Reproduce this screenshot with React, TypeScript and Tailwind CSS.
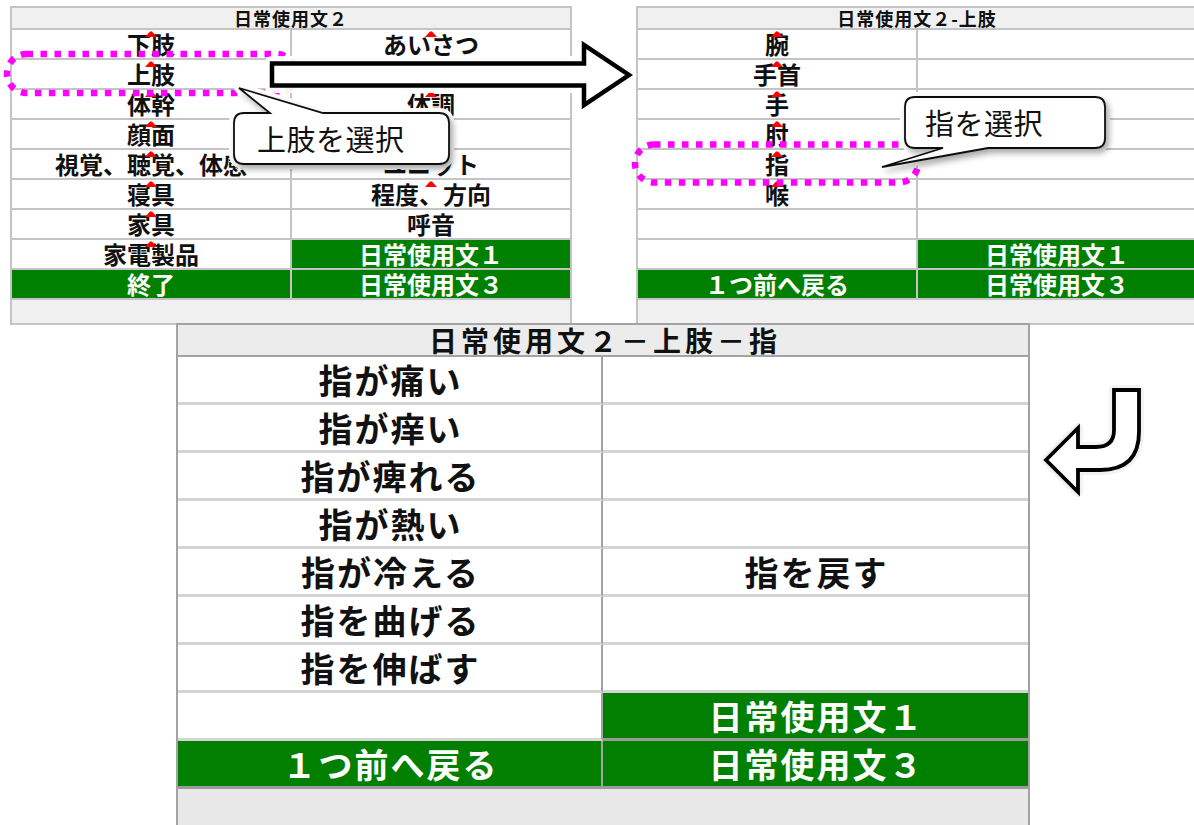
import React from 'react';

type Cell = { t?: string; g?: boolean; m?: boolean };

const font = "font-['Noto_Sans_CJK_JP','Noto_Sans',sans-serif]";

const upperRows: Cell[][] = [
  [{ t: '下肢', m: true }, { t: 'あいさつ', m: true }],
  [{ t: '上肢', m: true }, {}],
  [{ t: '体幹', m: true }, { t: '体調', m: true }],
  [{ t: '顔面', m: true }, {}],
  [{ t: '視覚、聴覚、体感', m: true }, { t: 'ユニット', m: true }],
  [{ t: '寝具', m: true }, { t: '程度、方向', m: true }],
  [{ t: '家具', m: true }, { t: '呼音' }],
  [{ t: '家電製品', m: true }, { t: '日常使用文１', g: true }],
  [{ t: '終了', g: true }, { t: '日常使用文３', g: true }],
];

const armRows: Cell[][] = [
  [{ t: '腕', m: true }, {}],
  [{ t: '手首', m: true }, {}],
  [{ t: '手', m: true }, {}],
  [{ t: '肘', m: true }, {}],
  [{ t: '指', m: true }, {}],
  [{ t: '喉', m: true }, {}],
  [{}, {}],
  [{}, { t: '日常使用文１', g: true }],
  [{ t: '１つ前へ戻る', g: true }, { t: '日常使用文３', g: true }],
];

const fingerRows: Cell[][] = [
  [{ t: '指が痛い' }, {}],
  [{ t: '指が痒い' }, {}],
  [{ t: '指が痺れる' }, {}],
  [{ t: '指が熱い' }, {}],
  [{ t: '指が冷える' }, { t: '指を戻す' }],
  [{ t: '指を曲げる' }, {}],
  [{ t: '指を伸ばす' }, {}],
  [{}, { t: '日常使用文１', g: true }],
  [{ t: '１つ前へ戻る', g: true }, { t: '日常使用文３', g: true }],
];

function Mark() {
  return (
    <svg className="absolute left-1/2 top-[1px] -translate-x-1/2" width="12" height="6" viewBox="0 0 12 6">
      <polygon points="0,6 5,0.5 7,0.5 12,6" fill="#ff0000" />
    </svg>
  );
}

function TopCell({ c, left }: { c: Cell; left?: boolean }) {
  return (
    <div
      className={`relative flex h-full items-center justify-center ${
        left ? 'w-[280px] border-r-2 border-[#c4c4c4]' : 'flex-1'
      } ${c.g ? 'bg-[#008000] text-white' : 'bg-white text-[#111]'}`}
    >
      {c.m && <Mark />}
      <span className="text-[24px] font-bold leading-[24px]">{c.t}</span>
    </div>
  );
}

function TopPanel({ title, rows }: { title: string; rows: Cell[][] }) {
  return (
    <div className="flex h-[319px] w-[562px] shrink-0 flex-col border-2 border-[#c4c4c4] bg-[#f0f0f0]">
      <div className="flex h-[22px] shrink-0 items-center justify-center border-b-2 border-[#c4c4c4] text-[18px] font-bold leading-[18px] tracking-[1px] text-[#111]">
        {title}
      </div>
      {rows.map((r, i) => (
        <div key={i} className="flex h-[30px] shrink-0 border-b-2 border-[#c4c4c4]">
          <TopCell c={r[0]} left />
          <TopCell c={r[1]} />
        </div>
      ))}
    </div>
  );
}

function BigCell({ c, left }: { c: Cell; left?: boolean }) {
  return (
    <div
      className={`flex h-full items-center justify-center border-b-[3px] ${
        left ? 'w-[425px] border-r-2 border-r-[#a3a3a3]' : 'flex-1'
      } ${c.g ? 'border-b-[#9a9a9a] bg-[#007f00] text-white' : 'border-b-[#d4d4d4] bg-white text-[#111]'}`}
    >
      <span className="pl-[2px] text-[34px] font-bold leading-[38px] tracking-[2px]">{c.t}</span>
    </div>
  );
}

function BottomPanel() {
  return (
    <div className="flex h-[520px] w-[854px] flex-col border-2 border-[#a3a3a3] bg-[#e8e8e8]">
      <div className="flex h-[32px] shrink-0 items-center justify-center border-b-2 border-[#a3a3a3] bg-[#ececec] pl-[4px] text-[28px] font-bold leading-[28px] tracking-[4px] text-[#111]">
        日常使用文２－上肢－指
      </div>
      {fingerRows.map((r, i) => (
        <div key={i} className="flex h-[48px] shrink-0">
          <BigCell c={r[0]} left />
          <BigCell c={r[1]} />
        </div>
      ))}
    </div>
  );
}

export default function App() {
  const rightArrow = 'M272 63.5 L584 63.5 L584 45 L629 75 L584 105 L584 85.5 L272 85.5 Z';
  const returnArrow =
    'M1114 390 L1139 390 L1139 432 Q1139 470 1100 470 L1078 470 L1078 492 L1046 460 L1078 428 L1078 447 L1096 447 Q1114 447 1114 430 Z';
  const bubbleOne =
    'M244 113 L270 113 L239 88 L323 113 L439 113 Q449 113 449 123 L449 154 Q449 164 439 164 L244 164 Q234 164 234 154 L234 123 Q234 113 244 113 Z';
  const bubbleTwo =
    'M915 97 L1095 97 Q1105 97 1105 107 L1105 138 Q1105 148 1095 148 L988 148 L882 167 L943 148 L915 148 Q905 148 905 138 L905 107 Q905 97 915 97 Z';

  return (
    <div className={`relative h-[825px] w-[1194px] overflow-hidden bg-white ${font}`}>
      <div className="flex gap-[64px] pl-[10px] pt-[6px]">
        <TopPanel title="日常使用文２" rows={upperRows} />
        <TopPanel title="日常使用文２-上肢" rows={armRows} />
      </div>
      <div className="relative -mt-[2px] ml-[176px]">
        <BottomPanel />
      </div>

      {/* selection marks, arrows and speech bubbles */}
      <svg className="pointer-events-none absolute left-0 top-0" width="1194" height="825" viewBox="0 0 1194 825">
        <defs>
          <filter id="bubble" x="-20%" y="-40%" width="150%" height="200%">
            <feDropShadow dx="3" dy="4" stdDeviation="3" floodColor="#000" floodOpacity="0.35" />
          </filter>
        </defs>
        <rect x="7" y="54" width="289" height="39" rx="19.5" fill="none" stroke="#ff00ff" strokeWidth="6.5" strokeDasharray="6.5 7.5" />
        <rect x="635" y="144.5" width="283" height="38" rx="19" fill="none" stroke="#ff00ff" strokeWidth="6.5" strokeDasharray="6.5 7.5" />

        <path d={rightArrow} fill="none" stroke="#fff" strokeWidth="15" strokeLinejoin="round" opacity="0.92" />
        <path d={rightArrow} fill="#fff" stroke="#000" strokeWidth="4.5" />

        <path d={returnArrow} fill="none" stroke="#f2f2f2" strokeWidth="10" strokeLinejoin="round" />
        <path d={returnArrow} fill="#fff" stroke="#000" strokeWidth="3.8" />

        <path d={bubbleOne} fill="none" stroke="#fff" strokeWidth="10" strokeLinejoin="round" />
        <path d={bubbleOne} fill="#fff" stroke="#111" strokeWidth="1.8" filter="url(#bubble)" />
        <path d={bubbleTwo} fill="none" stroke="#fff" strokeWidth="10" strokeLinejoin="round" />
        <path d={bubbleTwo} fill="#fff" stroke="#111" strokeWidth="1.8" filter="url(#bubble)" />
      </svg>

      <div className="absolute left-[234px] top-[113px] flex h-[51px] w-[215px] items-center pl-[23px] text-[29px] leading-none tracking-[0.5px] text-[#111]">
        上肢を選択
      </div>
      <div className="absolute left-[905px] top-[97px] flex h-[51px] w-[200px] items-center pl-[20px] text-[29px] leading-none tracking-[0.5px] text-[#111]">
        指を選択
      </div>
    </div>
  );
}
